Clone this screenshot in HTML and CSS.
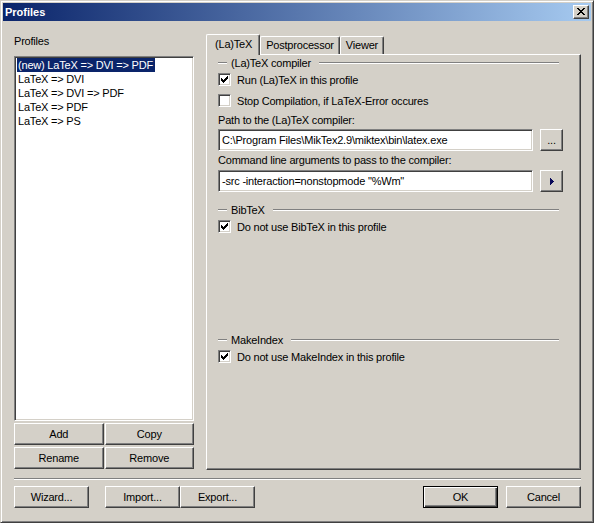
FILE: index.html
```html
<!DOCTYPE html>
<html>
<head>
<meta charset="utf-8">
<title>Profiles</title>
<link rel="stylesheet" href="styles.css">
</head>
<body>
<div class="window">
  <div class="titlebar">
    <span class="title">Profiles</span>
    <span class="close"><svg width="8" height="7" viewBox="0 0 8 7" shape-rendering="crispEdges"><path d="M0 0h2v1h1v1h2v-1h1v-1h2v1h-1v1h-1v1h-1v1h1v1h1v1h1v1h-2v-1h-1v-1h-2v1h-1v1h-2v-1h1v-1h1v-1h1v-1h-1v-1h-1v-1h-1z" fill="#000"/></svg></span>
  </div>
  <div class="content">
    <div class="main">
      <div class="left">
        <div class="lbl">Profiles</div>
        <div class="listbox">
          <div class="item"><span class="sel">(new) LaTeX =&gt; DVI =&gt; PDF</span></div>
          <div class="item">LaTeX =&gt; DVI</div>
          <div class="item">LaTeX =&gt; DVI =&gt; PDF</div>
          <div class="item">LaTeX =&gt; PDF</div>
          <div class="item">LaTeX =&gt; PS</div>
        </div>
        <div class="btngrid">
          <div class="btn">Add</div>
          <div class="btn">Copy</div>
          <div class="btn">Rename</div>
          <div class="btn">Remove</div>
        </div>
      </div>
      <div class="right">
        <div class="tabs">
          <div class="tab active">(La)TeX</div>
          <div class="tab">Postprocessor</div>
          <div class="tab">Viewer</div>
        </div>
        <div class="panel">
          <div class="group">
            <span class="dash"></span><span class="gtitle">(La)TeX compiler</span><span class="gline"></span>
          </div>
          <div class="cbrow">
            <span class="cb"><svg width="11" height="11" viewBox="1 1 11 11" shape-rendering="crispEdges"><path d="M3 5H4V6H5V7H6V6H7V5H8V4H9V3H10V6H9V7H8V8H7V9H6V10H5V9H4V8H3Z" fill="#000"/></svg></span>
            <span>Run (La)TeX in this profile</span>
          </div>
          <div class="cbrow">
            <span class="cb"></span>
            <span>Stop Compilation, if LaTeX-Error occures</span>
          </div>
          <div class="flabel">Path to the (La)TeX compiler:</div>
          <div class="inrow">
            <div class="input">C:\Program Files\MikTex2.9\miktex\bin\latex.exe</div>
            <div class="btn small">...</div>
          </div>
          <div class="flabel second">Command line arguments to pass to the compiler:</div>
          <div class="inrow">
            <div class="input">-src -interaction=nonstopmode "%Wm"</div>
            <div class="btn small"><svg width="4" height="7" viewBox="0 0 4 7" shape-rendering="crispEdges"><path d="M0 0H1V1H2V2H3V3H4V4H3V5H2V6H1V7H0Z" fill="#0a0a5a"/></svg></div>
          </div>
          <div class="group bib">
            <span class="dash"></span><span class="gtitle">BibTeX</span><span class="gline"></span>
          </div>
          <div class="cbrow">
            <span class="cb"><svg width="11" height="11" viewBox="1 1 11 11" shape-rendering="crispEdges"><path d="M3 5H4V6H5V7H6V6H7V5H8V4H9V3H10V6H9V7H8V8H7V9H6V10H5V9H4V8H3Z" fill="#000"/></svg></span>
            <span>Do not use BibTeX in this profile</span>
          </div>
          <div class="group mki">
            <span class="dash"></span><span class="gtitle">MakeIndex</span><span class="gline"></span>
          </div>
          <div class="cbrow">
            <span class="cb"><svg width="11" height="11" viewBox="1 1 11 11" shape-rendering="crispEdges"><path d="M3 5H4V6H5V7H6V6H7V5H8V4H9V3H10V6H9V7H8V8H7V9H6V10H5V9H4V8H3Z" fill="#000"/></svg></span>
            <span>Do not use MakeIndex in this profile</span>
          </div>
        </div>
      </div>
    </div>
    <div class="sep"></div>
    <div class="footer">
      <div class="btn wide">Wizard...</div>
      <div class="btn wide import">Import...</div>
      <div class="btn wide">Export...</div>
      <div class="spacer"></div>
      <div class="btn wide default">OK</div>
      <div class="btn wide">Cancel</div>
    </div>
  </div>
</div>
</body>
</html>
```
FILE: styles.css
```css
* { box-sizing: border-box; }
html, body { margin: 0; padding: 0; background: #d4d0c8; }
body {
  font-family: "Liberation Sans", Arial, sans-serif;
  font-size: 11px;
  letter-spacing: -0.2px;
  color: #000;
}
.window {
  width: 594px;
  height: 523px;
  background: #d4d0c8;
  border: 1px solid;
  border-color: #d4d0c8 #404040 #404040 #d4d0c8;
  box-shadow: inset 1px 1px #fff, inset -1px -1px #808080;
  padding: 2px;
  display: flex;
  flex-direction: column;
}
.titlebar {
  height: 18px;
  background: linear-gradient(to right, #0a246a, #a6caf0);
  display: flex;
  align-items: center;
  justify-content: space-between;
  padding: 0 2px 0 2px;
}
.title {
  color: #fff;
  font-weight: bold;
  font-size: 11px;
  letter-spacing: 0;
}
.close {
  width: 16px;
  height: 14px;
  background: #d4d0c8;
  border: 1px solid;
  border-color: #fff #404040 #404040 #fff;
  box-shadow: inset -1px -1px #808080;
  display: flex;
  align-items: center;
  justify-content: center;
  padding-bottom: 1px;
}
.content {
  flex: 1;
  padding: 13px 10px 0 11px;
  display: flex;
  flex-direction: column;
}
.main {
  display: flex;
  gap: 12px;
  height: 436px;
}
.left {
  width: 180px;
  display: flex;
  flex-direction: column;
}
.lbl {
  height: 22px;
  line-height: 14px;
}
.listbox {
  height: 365px;
  margin-bottom: 2px;
  background: #fff;
  border: 1px solid;
  border-color: #808080 #fff #fff #808080;
  box-shadow: inset 1px 1px #404040, inset -1px -1px #d4d0c8;
  padding: 1px;
}
.item {
  height: 14px;
  line-height: 14px;
  padding-left: 2px;
  white-space: nowrap;
}
.item .sel {
  display: inline-block;
  background: #0a246a;
  color: #fff;
  margin-left: -1px;
  padding: 0 2px 0 1px;
}
.btngrid {
  display: grid;
  grid-template-columns: 1fr 1fr;
  grid-auto-rows: 22px;
  gap: 2px 1px;
}
.btn {
  background: #d4d0c8;
  border: 1px solid;
  border-color: #fff #404040 #404040 #fff;
  box-shadow: inset -1px -1px #808080;
  display: flex;
  align-items: center;
  justify-content: center;
  height: 22px;
}
.right {
  width: 375px;
  display: flex;
  flex-direction: column;
}
.tabs {
  height: 20px;
  display: flex;
  align-items: flex-end;
  position: relative;
  z-index: 1;
}
.tab {
  height: 18px;
  padding: 0 5px;
  line-height: 16px;
  border: 1px solid;
  border-bottom: none;
  border-color: #fff #404040 #404040 #fff;
  box-shadow: inset -1px 0 #808080;
  border-radius: 2px 2px 0 0;
  background: #d4d0c8;
}
.tab.active {
  height: 21px;
  margin-bottom: -1px;
  padding: 0 7px 0 8px;
  line-height: 18px;
}
.panel {
  flex: 1;
  border: 1px solid;
  border-color: #fff #404040 #404040 #fff;
  box-shadow: inset -1px -1px #808080;
  padding: 1px 17px 0 11px;
  display: flex;
  flex-direction: column;
}
.group {
  height: 13px;
  display: flex;
  align-items: center;
  padding-right: 4px;
}
.dash, .gline {
  height: 2px;
  border-top: 1px solid #808080;
  border-bottom: 1px solid #fff;
}
.dash { width: 9px; }
.gtitle { padding: 0 4px; white-space: nowrap; }
.gline { flex: 1; margin-left: 4px; }
.group.bib { margin-top: 11px; }
.group.mki { margin-top: 96px; }
.cbrow {
  height: 21px;
  display: flex;
  align-items: center;
  gap: 6px;
}
.cb {
  width: 13px;
  height: 13px;
  background: #fff;
  border: 1px solid;
  border-color: #808080 #fff #fff #808080;
  box-shadow: inset 1px 1px #404040, inset -1px -1px #d4d0c8;
  display: block;
  flex: none;
}
.cb svg { display: block; }
.flabel {
  height: 18px;
  line-height: 18px;
}
.flabel.second { height: 19px; line-height: 19px; }
.inrow {
  display: flex;
  gap: 7px;
  height: 22px;
}
.input {
  flex: 1;
  background: #fff;
  border: 1px solid;
  border-color: #808080 #fff #fff #808080;
  box-shadow: inset 1px 1px #404040, inset -1px -1px #d4d0c8;
  padding-left: 3px;
  line-height: 20px;
  white-space: nowrap;
  overflow: hidden;
}
.btn.small {
  width: 23px;
  flex: none;
}
.sep {
  margin-top: 8px;
  height: 2px;
  border-top: 1px solid #808080;
  border-bottom: 1px solid #fff;
}
.footer {
  margin-top: 6px;
  display: flex;
}
.btn.wide { width: 75px; }
.btn.import { margin-left: 16px; }
.spacer { flex: 1; }
.btn.default {
  border-color: #000;
  box-shadow: inset 1px 1px #fff, inset -1px -1px #404040, inset -2px -2px #808080;
  margin-right: 8px;
}
```
